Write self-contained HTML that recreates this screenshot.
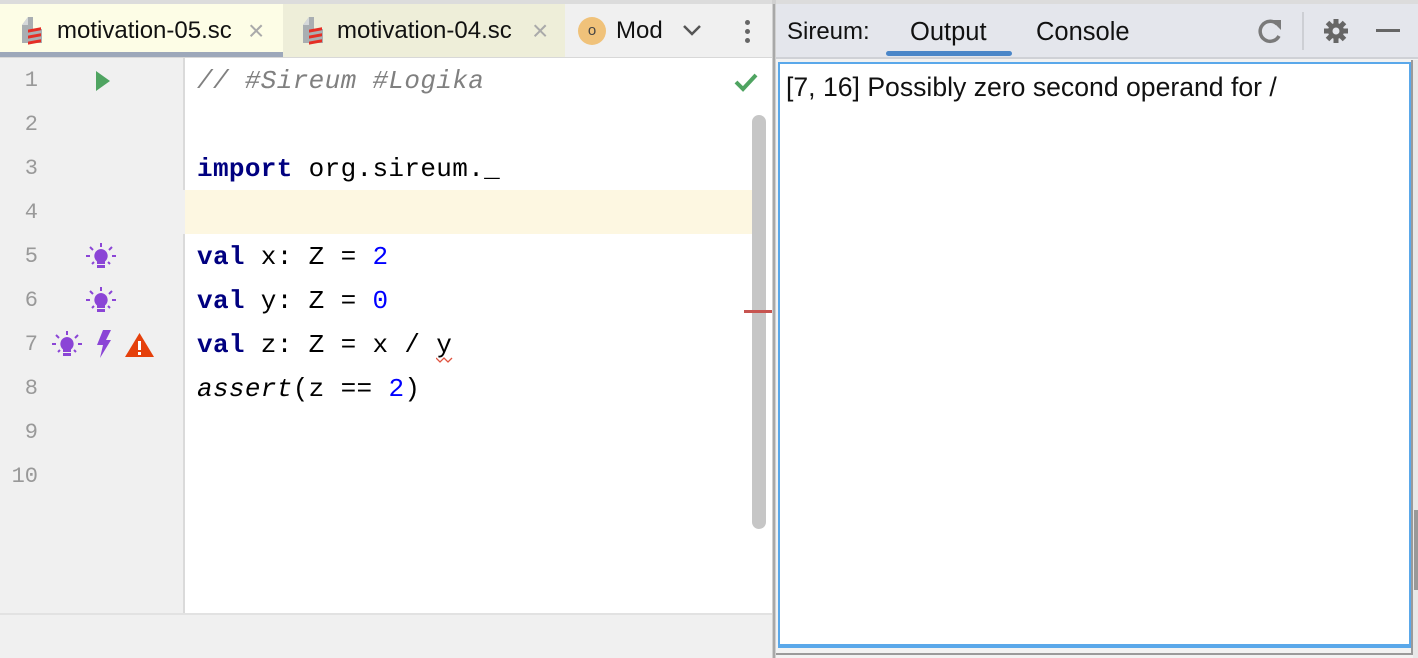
<!DOCTYPE html>
<html><head><meta charset="utf-8"><style>
*{margin:0;padding:0;box-sizing:border-box}
body{width:1418px;height:658px;background:#f0f0f0;position:relative;overflow:hidden;font-family:"Liberation Sans",sans-serif}
.abs{position:absolute}
.tab{position:absolute;top:4px;height:53px;font-size:24px;color:#111;line-height:53px}
.code{position:absolute;left:197px;font-family:"Liberation Mono",monospace;font-size:26px;letter-spacing:0.35px;line-height:44px;height:44px}
.ln{position:absolute;left:0;width:40px;text-align:right;font-family:"Liberation Mono",monospace;font-size:22px;color:#999;line-height:44px;padding-right:2px}
.kw{color:#000080;font-weight:bold}
.num{color:#0000ff}
.x{color:#aaa;font-size:28px;font-weight:300}
</style></head><body>
<div class="abs" style="left:0;top:0;width:1418px;height:4px;background:#dcdcdc"></div>
<div class="abs" style="left:0;top:4px;width:772px;height:53px;background:#f0f0f0"></div>
<div class="tab" style="left:0;width:283px;background:#fdfde6"></div>
<div class="abs" style="left:0;top:52px;width:283px;height:5px;background:#9da8ba"></div>
<div class="tab" style="left:283px;width:282px;background:#eeeed9"></div>
<svg class="abs" style="left:20px;top:15px" width="22" height="30"><path d="M2 10 L8 2 H13 V14 H22 V28 H2 Z" fill="#a9aeb2"/><path d="M8 2 V10 H2" fill="#d5d8da"/><rect x="8" y="16" width="13" height="3" fill="#e52e25" transform="skewY(-10)"/><rect x="8" y="22" width="13" height="3" fill="#e52e25" transform="skewY(-10)"/><rect x="8" y="28" width="13" height="3" fill="#e52e25" transform="skewY(-10)"/></svg>
<div class="tab" style="left:57px">motivation-05.sc</div>
<div class="tab x" style="left:248px">×</div>
<svg class="abs" style="left:301px;top:15px" width="22" height="30"><path d="M2 10 L8 2 H13 V14 H22 V28 H2 Z" fill="#a9aeb2"/><path d="M8 2 V10 H2" fill="#d5d8da"/><rect x="8" y="16" width="13" height="3" fill="#e52e25" transform="skewY(-10)"/><rect x="8" y="22" width="13" height="3" fill="#e52e25" transform="skewY(-10)"/><rect x="8" y="28" width="13" height="3" fill="#e52e25" transform="skewY(-10)"/></svg>
<div class="tab" style="left:337px">motivation-04.sc</div>
<div class="tab x" style="left:532px">×</div>
<div class="abs" style="left:578px;top:17px;width:28px;height:28px;border-radius:50%;background:#f0c27a;text-align:center;line-height:27px;font-size:15px;color:#444">o</div>
<div class="tab" style="left:616px">Mod</div>
<svg class="abs" style="left:681px;top:22px" width="22" height="16"><path d="M3 4 L11 12 L19 4" stroke="#555" stroke-width="2.5" fill="none"/></svg>
<div class="abs" style="left:745px;top:20px;width:5px;height:5px;border-radius:50%;background:#666;box-shadow:0 9px 0 #666,0 18px 0 #666"></div>
<div class="abs" style="left:0;top:57px;width:772px;height:1px;background:#d8d8d8"></div>
<div class="abs" style="left:185px;top:58px;width:587px;height:555px;background:#fff"></div>
<div class="abs" style="left:183px;top:58px;width:2px;height:555px;background:#dadada"></div>
<div class="abs" style="left:0;top:190px;width:185px;height:44px;background:#f0f0f0"></div>
<div class="abs" style="left:185px;top:190px;width:580px;height:44px;background:#fdf7e1"></div>
<div class="abs" style="left:0;top:613px;width:772px;height:2px;background:#e2e2e2"></div>
<div class="ln" style="top:59px">1</div><div class="ln" style="top:103px">2</div><div class="ln" style="top:147px">3</div><div class="ln" style="top:191px">4</div><div class="ln" style="top:235px">5</div><div class="ln" style="top:279px">6</div><div class="ln" style="top:323px">7</div><div class="ln" style="top:367px">8</div><div class="ln" style="top:411px">9</div><div class="ln" style="top:455px">10</div>
<svg class="abs" style="left:94px;top:70px" width="18" height="22"><path d="M2 1 L16 11 L2 21Z" fill="#4fa461"/></svg>
<svg width="0" height="0" style="position:absolute"><defs><g id="bulb"><g stroke="#8b45d6" stroke-width="2"><path d="M15 1v4M4 5l3 3M26 5l-3 3M0 14h4M26 14h4M6 22l2-2M24 22l-2-2"/></g><path d="M15 7a7 7 0 0 0-4 12.5V22h8v-2.5A7 7 0 0 0 15 7z" fill="#8b45d6"/><rect x="11" y="23" width="8" height="3" fill="#8b45d6"/></g></defs></svg>
<svg class="abs" style="left:86px;top:242px" width="30" height="28"><use href="#bulb"/></svg>
<svg class="abs" style="left:86px;top:286px" width="30" height="28"><use href="#bulb"/></svg>
<svg class="abs" style="left:52px;top:330px" width="30" height="28"><use href="#bulb"/></svg>
<svg class="abs" style="left:94px;top:330px" width="18" height="28"><path d="M9 0 L17 0 L12 10 L17 10 L6 28 L9 15 L3 15 Z" fill="#8b45d6"/></svg>
<svg class="abs" style="left:124px;top:332px" width="31" height="26"><path d="M15.5 1 L30 25 H1 Z" fill="#e5400b"/><rect x="14" y="9" width="3" height="9" fill="#fff"/><rect x="14" y="20" width="3" height="3" fill="#fff"/></svg>
<div class="code" style="top:59px;color:#808080;font-style:italic">// #Sireum #Logika</div>
<div class="code" style="top:147px"><span class="kw">import</span> org.sireum._</div>
<div class="code" style="top:235px"><span class="kw">val</span> x: Z = <span class="num">2</span></div>
<div class="code" style="top:279px"><span class="kw">val</span> y: Z = <span class="num">0</span></div>
<div class="code" style="top:323px"><span class="kw">val</span> z: Z = x / y</div>
<svg class="abs" style="left:436px;top:357px" width="18" height="6"><path d="M0 1 L4 5 L8 1 L12 5 L16 1" stroke="#e0533f" stroke-width="1.3" fill="none"/></svg>
<div class="code" style="top:367px"><i>assert</i>(z == <span class="num">2</span>)</div>
<svg class="abs" style="left:734px;top:72px" width="24" height="20"><path d="M2 10 L9 17 L22 3" stroke="#4fa461" stroke-width="4" fill="none"/></svg>
<div class="abs" style="left:752px;top:115px;width:14px;height:414px;border-radius:7px;background:#c6c6c6"></div>
<div class="abs" style="left:744px;top:310px;width:28px;height:3px;background:#c75450"></div>
<div class="abs" style="left:772px;top:0;width:4px;height:658px;background:#d0d0d0"></div>
<div class="abs" style="left:773px;top:4px;width:2px;height:654px;background:#a8a8a8"></div>
<div class="abs" style="left:776px;top:4px;width:642px;height:53px;background:#e4e6ec"></div>
<div class="abs" style="left:776px;top:57px;width:642px;height:2px;background:#cfd1d6"></div>
<div class="abs" style="left:787px;top:4px;font-size:24px;line-height:56px;color:#111">Sireum:</div>
<div class="abs" style="left:910px;top:4px;font-size:25.5px;line-height:56px;color:#111">Output</div>
<div class="abs" style="left:1036px;top:4px;font-size:25.5px;line-height:56px;color:#111">Console</div>
<div class="abs" style="left:886px;top:51px;width:126px;height:5px;border-radius:3px;background:#4a86c8"></div>
<svg class="abs" style="left:1255px;top:16px" width="30" height="30"><path d="M22 8 A10 10 0 1 0 24 20" stroke="#7a7a7a" stroke-width="3.5" fill="none"/><path d="M16 4 H26 V14 Z" fill="#7a7a7a"/></svg>
<div class="abs" style="left:1302px;top:12px;width:2px;height:38px;background:#cdcfd4"></div>
<svg class="abs" style="left:1322px;top:17px" width="28" height="28"><g fill="#666"><circle cx="14" cy="14" r="8"/><g stroke="#666" stroke-width="5"><path d="M14 2v24M2 14h24M5.5 5.5l17 17M22.5 5.5l-17 17"/></g></g><circle cx="14" cy="14" r="3.5" fill="#e4e6ec"/></svg>
<div class="abs" style="left:1376px;top:29px;width:24px;height:3px;background:#666"></div>
<div class="abs" style="left:776px;top:59px;width:642px;height:599px;background:#f2f2f2"></div>
<div class="abs" style="left:776px;top:60px;width:637px;height:595px;border:2px solid #9a9a9a;border-top:none;border-left:none"></div>
<div class="abs" style="left:778px;top:62px;width:633px;height:586px;border:2px solid #5aa8ea;background:#fff;border-bottom-width:4px"></div>
<div class="abs" style="left:786px;top:70px;font-size:26.6px;line-height:34px;color:#111">[7, 16] Possibly zero second operand for /</div>
<div class="abs" style="left:1413px;top:60px;width:5px;height:598px;background:#e8e8e8"></div>
<div class="abs" style="left:1414px;top:510px;width:4px;height:80px;background:#999"></div>
</body></html>
